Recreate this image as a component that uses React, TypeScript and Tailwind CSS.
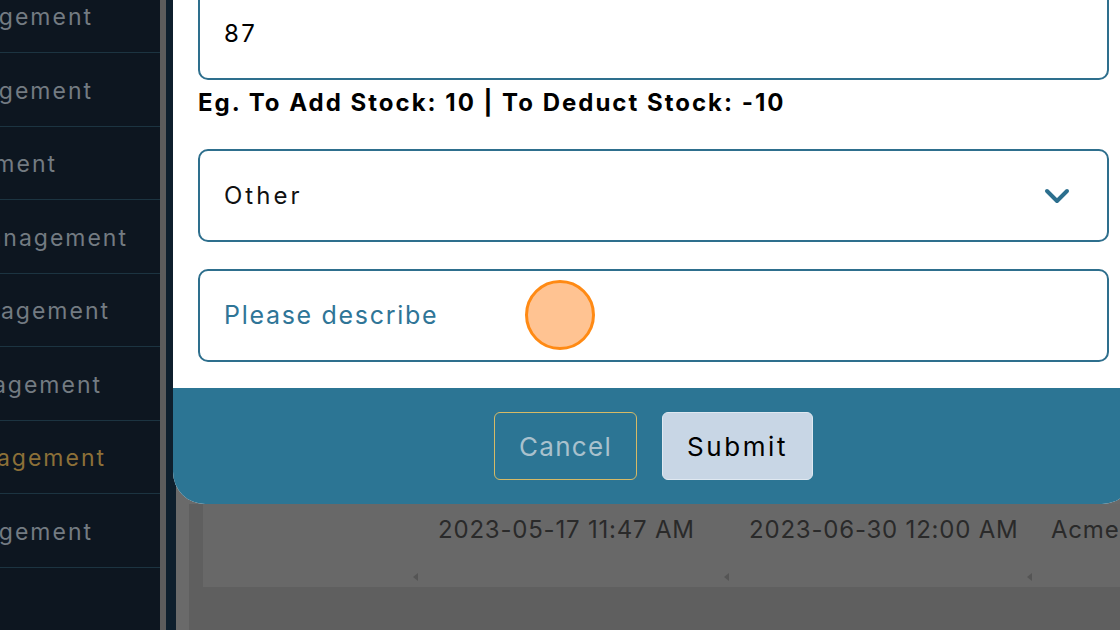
import React from "react";

const sidebarRows = [
  { label: "Stock Management", pr: "pr-[67px]", active: false },
  { label: "Order Management", pr: "pr-[67px]", active: false },
  { label: "User Management", pr: "pr-[103px]", active: false },
  { label: "Vendor Management", pr: "pr-[32px]", active: false },
  { label: "Product Management", pr: "pr-[50px]", active: false },
  { label: "Client Management", pr: "pr-[58px]", active: false },
  { label: "Inventory Management", pr: "pr-[54px]", active: true },
  { label: "Report Management", pr: "pr-[67px]", active: false },
];

function Tick() {
  return (
    <svg width="5" height="8" viewBox="0 0 5 8" className="block">
      <path d="M5 0 L0 4 L5 8 Z" fill="#555555" />
    </svg>
  );
}

export default function App() {
  return (
    <div
      className="relative w-[1120px] h-[630px] overflow-hidden flex bg-[#5f5f5f]"
      style={{ fontFamily: "Inter, 'Noto Sans', sans-serif" }}
    >
      {/* Sidebar */}
      <aside className="w-[160px] shrink-0 bg-[#0d1620] overflow-hidden">
        <div className="-mt-[20.5px] flex flex-col">
          {sidebarRows.map((r, i) => (
            <div
              key={i}
              className={`h-[73.5px] pt-[4px] flex items-center justify-end overflow-hidden whitespace-nowrap border-b border-[#1c3441] ${r.pr}`}
            >
              <span
                className={`text-[23px] leading-none tracking-[2px] ${
                  r.active ? "text-[#8c7038]" : "text-[#737b82]"
                }`}
              >
                {r.label}
              </span>
            </div>
          ))}
        </div>
      </aside>
      <div className="w-[6px] shrink-0 bg-[#5c5c5c]" />
      <div className="w-[10px] shrink-0 bg-[#0e1f2d]" />

      {/* Dimmed main content */}
      <main className="flex-1 flex flex-col bg-[#6a6a6a]">
        <div className="h-[504px]" />
        <div className="flex h-[83px] ml-[13px]">
          <div className="w-[14px] bg-[#5f5f5f]" />
          <div className="flex-1 flex bg-[#686868]">
            <div className="w-[208px]" />
            <div className="w-[311px] flex flex-col pl-[2px]">
              <div className="pt-[10px] pl-[25px] text-[24px] leading-[32px] tracking-[0.8px] text-[#2a2a2a] whitespace-nowrap">
                2023-05-17 11:47 AM
              </div>
              <div className="mt-[27px]">
                <Tick />
              </div>
            </div>
            <div className="w-[303px] flex flex-col pl-[2px]">
              <div className="pt-[10px] pl-[25px] text-[24px] leading-[32px] tracking-[0.8px] text-[#2a2a2a] whitespace-nowrap">
                2023-06-30 12:00 AM
              </div>
              <div className="mt-[27px]">
                <Tick />
              </div>
            </div>
            <div className="flex-1 flex flex-col pl-[2px] overflow-hidden">
              <div className="pt-[10px] pl-[24px] text-[24px] leading-[32px] tracking-[0.8px] text-[#2a2a2a] whitespace-nowrap">
                Acme Corp
              </div>
              <div className="mt-[27px]">
                <Tick />
              </div>
            </div>
          </div>
        </div>
        <div className="flex-1 flex">
          <div className="w-[13px] bg-[#6a6a6a]" />
          <div className="flex-1 bg-[#5f5f5f]" />
        </div>
      </main>

      {/* Modal */}
      <div className="absolute left-[173px] top-[-13px] w-[961px] rounded-b-[32px] overflow-hidden bg-white">
        <div className="px-[25px] pb-[26px]">
          <div className="h-[93px] rounded-[10px] border-[2.5px] border-[#2e6f8d] flex items-center pl-[24px] text-[24px] tracking-[2.5px] text-black">
            87
          </div>
          <div className="mt-[8px] mb-[31px] text-[24px] leading-[30px] font-bold tracking-[2px] text-black whitespace-nowrap">
            Eg. To Add Stock: 10 | To Deduct Stock: -10
          </div>
          <div className="h-[93px] rounded-[10px] border-[2.5px] border-[#2e6f8d] flex items-center justify-between pl-[24px] pr-[36px] text-[24px] tracking-[3px] text-[#111111]">
            <span>Other</span>
            <svg width="28" height="18" viewBox="0 0 28 18">
              <path
                d="M4 4 L14 14 L24 4"
                fill="none"
                stroke="#2c6f8e"
                strokeWidth="4"
                strokeLinecap="round"
                strokeLinejoin="round"
              />
            </svg>
          </div>
          <div className="mt-[27px] h-[93px] rounded-[10px] border-[2.5px] border-[#2e6f8d] flex items-center pl-[24px] text-[25px] tracking-[1.7px] text-[#2f7597]">
            Please describe
          </div>
        </div>
        <div className="h-[116px] bg-[#2c7594] flex items-center justify-center gap-[25px]">
          <button className="w-[143px] h-[68px] rounded-[6px] border-[1.5px] border-[#d6ba66] text-[26px] tracking-[1.3px] text-[#a9c1cd]">
            Cancel
          </button>
          <button className="w-[151px] h-[68px] rounded-[6px] border-[1.5px] border-[#dfe8f1] bg-[#c8d6e5] text-[26px] tracking-[2.6px] text-black">
            Submit
          </button>
        </div>
      </div>

      {/* Touch indicator */}
      <div className="absolute left-[525px] top-[280px] w-[70px] h-[70px] rounded-full border-[3px] border-[#ff8a14] bg-[#ffc392]" />
    </div>
  );
}
